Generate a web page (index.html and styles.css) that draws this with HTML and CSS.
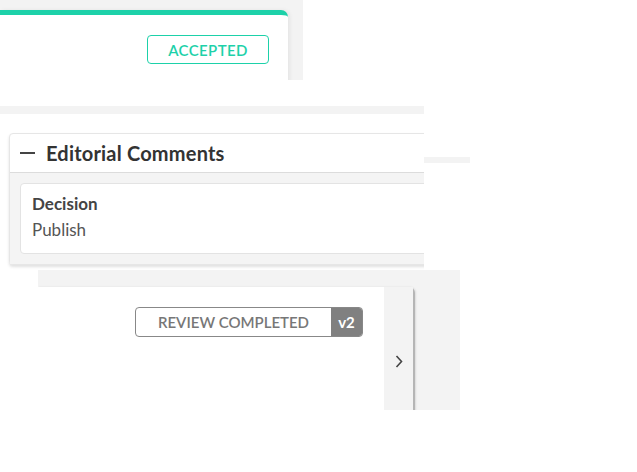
FILE: index.html
```html
<!DOCTYPE html>
<html lang="en">
<head>
  <meta charset="UTF-8">
  <title>Submission Review</title>
  <link rel="stylesheet" href="styles.css">
</head>
<body>
  <div class="top-strip">
    <div class="status-card">
      <div class="status-row">
        <span class="badge badge-accepted">Accepted</span>
      </div>
    </div>
  </div>

  <div class="mid-row">
    <div class="mid-clip">
      <div class="bar"></div>
      <div class="panel">
        <div class="panel-head">
          <span class="collapse-icon"></span>
          <h3>Editorial Comments</h3>
        </div>
        <div class="panel-body">
          <div class="field-card">
            <div class="field-label">Decision</div>
            <div class="field-value">Publish</div>
          </div>
        </div>
      </div>
    </div>
    <div class="mid-side">
      <div class="side-bar"></div>
    </div>
  </div>

  <div class="bottom-strip">
    <div class="review-card">
      <div class="review-main">
        <div class="badge-group">
          <span class="badge-label">Review Completed</span>
          <span class="badge-version">v2</span>
        </div>
      </div>
      <div class="review-nav">
        <svg width="8" height="13" viewBox="0 0 8 13"><path d="M1.5 1 L6.5 6.5 L1.5 12" fill="none" stroke="#444" stroke-width="1.6"/></svg>
      </div>
    </div>
  </div>
</body>
</html>
```

FILE: styles.css
```css
* {
  margin: 0;
  padding: 0;
  box-sizing: border-box;
}
body {
  font-family: 'Lato', 'Open Sans', sans-serif;
  background: #fff;
  color: #333;
}
.top-strip {
  width: 303px;
  height: 80px;
  background-color: #f3f3f3;
  padding-top: 10px;
  overflow: hidden;
}
.status-card {
  width: 288px;
  height: 100px;
  background-color: #fff;
  border-top: 5px solid #1dd1a9;
  border-top-right-radius: 7px;
  box-shadow: 2px 0 4px rgba(0, 0, 0, 0.06);
}
.status-row {
  display: flex;
  justify-content: flex-end;
  padding: 20px 19px 0 0;
}
.badge {
  display: inline-flex;
  align-items: center;
  justify-content: center;
  height: 29px;
  border-radius: 4px;
  font-size: 15px;
  font-weight: 600;
  text-transform: uppercase;
  letter-spacing: 0.4px;
}
.badge-accepted {
  width: 122px;
  border: 1px solid #1dd1a9;
  color: #1dd1a9;
}
.mid-row {
  display: flex;
  margin-top: 26px;
}
.mid-clip {
  width: 424px;
  overflow: hidden;
  padding-bottom: 5px;
}
.bar {
  height: 8px;
  background-color: #f3f3f3;
}
.panel {
  width: 460px;
  margin: 19px 0 0 9px;
  border: 1px solid #e6e6e6;
  border-radius: 4px;
  box-shadow: 0 2px 3px rgba(0, 0, 0, 0.12);
  background-color: #fff;
}
.panel-head {
  display: flex;
  align-items: center;
  height: 39px;
  padding-left: 10px;
  border-bottom: 1px solid #dcdcdc;
}
.collapse-icon {
  width: 15px;
  height: 2px;
  background-color: #444;
  margin-right: 11px;
}
.panel-head h3 {
  font-size: 20px;
  font-weight: bold;
  color: #333;
  letter-spacing: 0.2px;
}
.panel-body {
  background-color: #f4f4f4;
  padding: 10px;
}
.field-card {
  height: 71px;
  background-color: #fff;
  border: 1px solid #e3e3e3;
  border-radius: 4px;
  padding: 9px 11px;
}
.field-label {
  font-size: 17px;
  font-weight: bold;
  color: #444;
  line-height: 22px;
}
.field-value {
  font-size: 17px;
  color: #555;
  line-height: 30px;
}
.mid-side {
  width: 46px;
}
.side-bar {
  height: 6px;
  margin-top: 51px;
  background-color: #f3f3f3;
}
.bottom-strip {
  width: 422px;
  height: 140px;
  margin: 0 0 0 38px;
  padding-top: 17px;
  background-color: #f3f3f3;
  overflow: hidden;
}
.review-card {
  display: flex;
  width: 377px;
  height: 160px;
  background-color: #fff;
  border-top-right-radius: 6px;
  border-right: 2px solid #b5b5b5;
  box-shadow: 1px 0 2px rgba(0, 0, 0, 0.1);
}
.review-main {
  flex: 1;
  display: flex;
  justify-content: flex-end;
  align-items: flex-start;
  padding: 20px 21px 0 0;
}
.badge-group {
  display: flex;
  height: 30px;
  border: 1px solid #888;
  border-radius: 4px;
  overflow: hidden;
}
.badge-label {
  display: flex;
  align-items: center;
  justify-content: center;
  width: 195px;
  font-size: 15px;
  font-weight: 600;
  color: #777;
  text-transform: uppercase;
}
.badge-version {
  display: flex;
  align-items: center;
  justify-content: center;
  width: 31px;
  background-color: #808080;
  color: #fff;
  font-weight: bold;
  font-size: 15px;
}
.review-nav {
  width: 29px;
  background-color: #f3f3f3;
  display: flex;
  justify-content: center;
  padding-top: 68px;
}
```
